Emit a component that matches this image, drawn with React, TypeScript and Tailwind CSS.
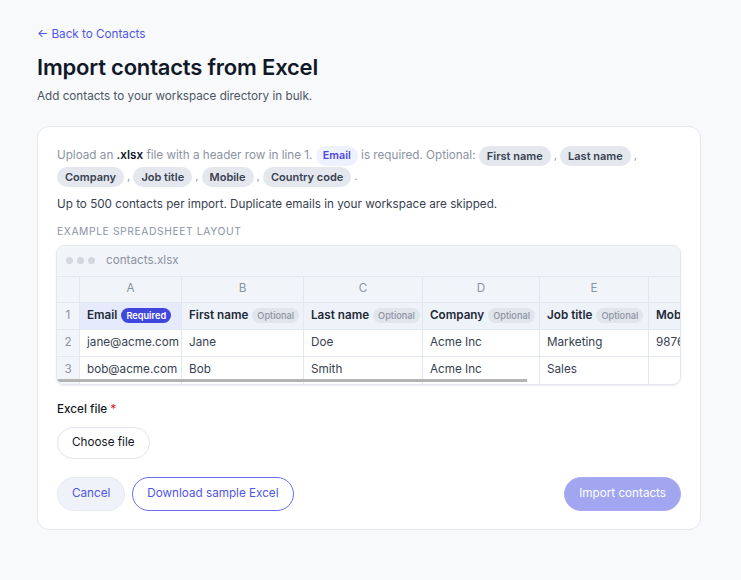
import React from "react";

const Chip = ({ children, email }: { children: React.ReactNode; email?: boolean }) => (
  <span
    className={
      "inline-flex items-center h-[20px] rounded-full font-semibold align-middle " +
      (email ? "px-[7px] text-[10.75px] bg-[#eef2ff] text-[#4f46e5]" : "px-[8px] text-[11px] bg-[#e4e7ee] text-[#374151]")
    }
  >
    {children}
  </span>
);

const Sep = ({ c }: { c: string }) => <span className="mx-[3px] text-[#9aa1b0]">{c}</span>;

const cols = [
  { l: "A", w: "w-[102px]", h: "Email", req: true, r2: "jane@acme.com", r3: "bob@acme.com" },
  { l: "B", w: "w-[122px]", h: "First name", r2: "Jane", r3: "Bob" },
  { l: "C", w: "w-[119px]", h: "Last name", r2: "Doe", r3: "Smith" },
  { l: "D", w: "w-[117px]", h: "Company", r2: "Acme Inc", r3: "Acme Inc" },
  { l: "E", w: "w-[109px]", h: "Job title", r2: "Marketing", r3: "Sales" },
  { l: "F", w: "w-[120px]", h: "Mobile", r2: "9876543210", r3: "" },
];

export default function App() {
  return (
    <div
      className="min-h-[580px] bg-[#f8f9fb] px-[37px] pt-[26px] pb-[50px]"
      style={{ fontFamily: "Inter, 'Noto Sans', sans-serif" }}
    >
      <a className="text-[11.7px] text-[#4f55e6] leading-[16px] block">← Back to Contacts</a>
      <h1 className="mt-[11px] text-[22px] font-semibold text-[#111827] leading-[28px] tracking-[-0.2px]">
        Import contacts from Excel
      </h1>
      <p className="mt-[7px] text-[11.7px] text-[#4b5563] leading-[16px]">
        Add contacts to your workspace directory in bulk.
      </p>

      <div className="mt-[22px] w-[664px] bg-white border border-[#e5e7eb] rounded-[12px] px-[19px] pt-[18px] pb-[18px]">
        <div className="text-[11.7px] leading-[20px] text-[#8b93a3]">
          Upload an <span className="font-semibold text-[#111827]">.xlsx</span> file with a header row in line 1.{" "}
          <Chip email>Email</Chip> is required. Optional: <Chip>First name</Chip>
          <Sep c="," />
          <Chip>Last name</Chip>
          <Sep c="," />
          <br />
          <Chip>Company</Chip>
          <Sep c="," />
          <Chip>Job title</Chip>
          <Sep c="," />
          <Chip>Mobile</Chip>
          <Sep c="," />
          <Chip>Country code</Chip>
          <Sep c="." />
        </div>
        <p className="mt-[8px] text-[11.7px] leading-[18px] text-[#374151]">
          Up to 500 contacts per import. Duplicate emails in your workspace are skipped.
        </p>
        <p className="mt-[10px] text-[10.3px] leading-[16px] tracking-[0.6px] uppercase text-[#8b93a6]">
          Example spreadsheet layout
        </p>

        <div className="mt-[6px] -ml-[1px] relative border border-[#e3e7ee] rounded-[8px] overflow-hidden shadow-[0_1px_2px_rgba(0,0,0,0.08)]">
          <div className="h-[31px] bg-[#f1f4f9] flex items-center px-[9px] gap-[4px] border-b border-[#e3e7ee]">
            <span className="w-[7px] h-[7px] rounded-full bg-[#d3d7de]" />
            <span className="w-[7px] h-[7px] rounded-full bg-[#d3d7de]" />
            <span className="w-[7px] h-[7px] rounded-full bg-[#d3d7de]" />
            <span className="ml-[7px] text-[11.7px] text-[#8b93a3]">contacts.xlsx</span>
          </div>
          <div className="flex text-[11.7px]">
            <div className="w-[23px] shrink-0 flex flex-col">
              <div className="h-[26px] bg-[#f1f4f9] border-b border-r border-[#e3e7ee]" />
              {["1", "2", "3"].map((n, i) => (
                <div
                  key={n}
                  className={
                    "h-[27px] bg-[#f1f4f9] border-r border-[#e3e7ee] flex items-center justify-center text-[#8b93a3] " +
                    (i < 2 ? "border-b" : "")
                  }
                >
                  {n}
                </div>
              ))}
            </div>
            {cols.map((c) => (
              <div key={c.l} className={c.w + " shrink-0 flex flex-col"}>
                <div className="h-[26px] bg-[#f1f4f9] border-b border-r border-[#e3e7ee] flex items-center justify-center text-[#8b93a3]">
                  {c.l}
                </div>
                <div
                  className={
                    "h-[27px] border-b border-r border-[#e3e7ee] flex items-center px-[7px] gap-[4px] whitespace-nowrap " +
                    (c.req ? "bg-[#e6eafd]" : "bg-[#eef3fa]")
                  }
                >
                  <span className="font-semibold text-[#1f2937]">{c.h}</span>
                  {c.req ? (
                    <span className="h-[15px] px-[5px] rounded-full bg-[#4047dc] text-white text-[9.2px] font-semibold flex items-center">
                      Required
                    </span>
                  ) : (
                    <span className="h-[15px] px-[5px] rounded-full bg-[#e1e5ec] text-[#8b93a3] text-[9.2px] font-medium flex items-center">
                      Optional
                    </span>
                  )}
                </div>
                <div className="h-[27px] border-b border-r border-[#e3e7ee] flex items-center px-[7px] text-[#374151] whitespace-nowrap">
                  {c.r2}
                </div>
                <div className="h-[27px] border-r border-[#e3e7ee] flex items-center px-[7px] text-[#374151] whitespace-nowrap">
                  {c.r3}
                </div>
              </div>
            ))}
          </div>
          <div className="absolute left-0 bottom-[2px] w-[470px] h-[3px] bg-[#b4b4b4]" />
        </div>

        <p className="mt-[16px] text-[11.7px] font-medium text-[#111827] leading-[16px]">
          Excel file <span className="text-[#dc2626]">*</span>
        </p>
        <button className="mt-[10px] h-[32px] px-[14px] rounded-full border border-[#e1e5ee] bg-white text-[11.7px] text-[#111827]">
          Choose file
        </button>

        <div className="mt-[18px] flex items-center">
          <button className="h-[34px] px-[14px] rounded-full border border-[#e6e9f0] bg-[#eff2f8] text-[11.7px] text-[#4f55e6]">
            Cancel
          </button>
          <button className="ml-[7px] h-[34px] px-[14px] rounded-full border border-[#6a70ee] bg-white text-[11.7px] text-[#4f55e6]">
            Download sample Excel
          </button>
          <button className="ml-auto h-[34px] px-[14px] rounded-full bg-[#a2a6f0] border border-[#a9adf2] text-[11.7px] text-white">
            Import contacts
          </button>
        </div>
      </div>
    </div>
  );
}
